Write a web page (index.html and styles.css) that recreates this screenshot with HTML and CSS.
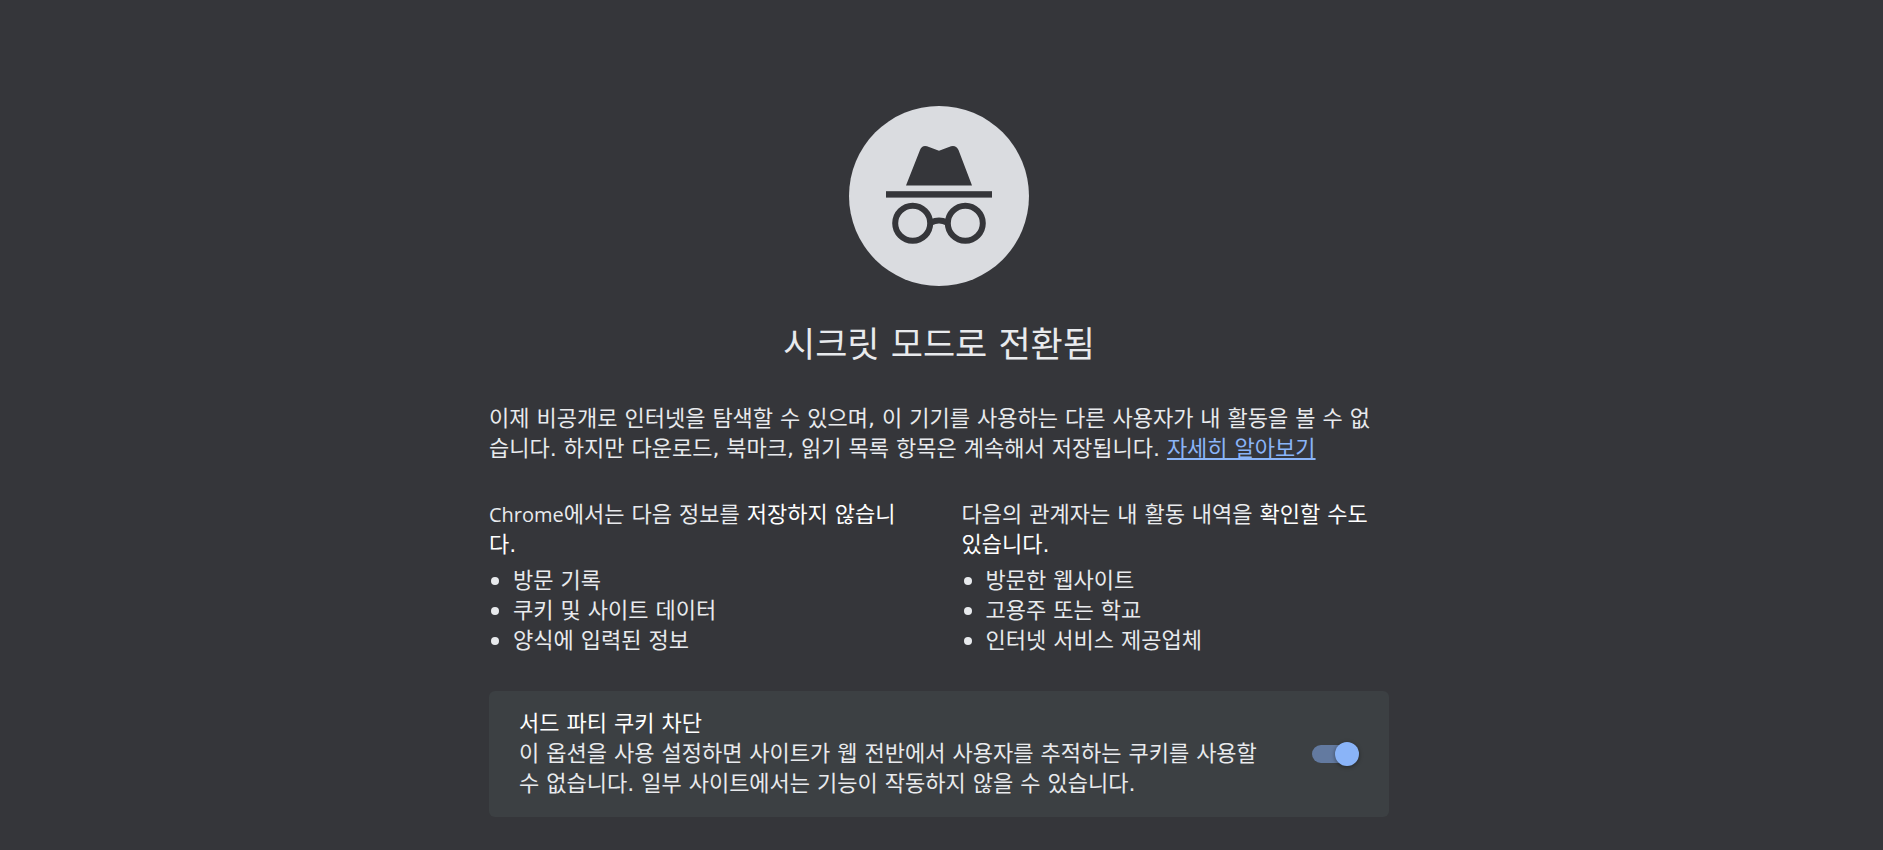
FILE: index.html
```html
<!DOCTYPE html>
<html lang="ko">
<head>
    <meta charset="UTF-8">
    <meta name="viewport" content="width=device-width, initial-scale=1.0">
    <title>새 시크릿 탭</title>
    <link rel="stylesheet" href="styles.css">
</head>
<body>
    <main class="content">
        <svg class="icon" viewBox="0 0 180 180" aria-hidden="true">
            <circle cx="90" cy="90" r="90" fill="#dadce0"/>
            <path fill="#35363a" d="M57 79.5 L71 44 Q73 39 78 40.3 L90 44.7 L102 40.3 Q107 39 109.5 44 L123 79.5 Z"/>
            <rect x="37" y="85.2" width="106" height="6.4" fill="#35363a"/>
            <g fill="none" stroke="#35363a" stroke-width="6">
                <circle cx="63.7" cy="117.3" r="17.5"/>
                <circle cx="116.3" cy="117.3" r="17.5"/>
                <path d="M82 116.5 Q90 112.5 98 116.5"/>
            </g>
        </svg>

        <h1>시크릿 모드로 전환됨</h1>

        <p class="subtitle">이제 비공개로 인터넷을 탐색할 수 있으며, 이 기기를 사용하는 다른 사용자가 내 활동을 볼 수 없습니다. 하지만 다운로드, 북마크, 읽기 목록 항목은 계속해서 저장됩니다. <a href="#">자세히 알아보기</a></p>

        <div class="columns">
            <div class="column">
                <span class="brand">Chrome</span>에서는 다음 정보를 <em>저장하지 않습니다.</em>
                <ul>
                    <li>방문 기록</li>
                    <li>쿠키 및 사이트 데이터</li>
                    <li>양식에 입력된 정보</li>
                </ul>
            </div>
            <div class="column">
                다음의 관계자는 내 활동 내역을 <em>확인할 수도 있습니다.</em>
                <ul>
                    <li>방문한 웹사이트</li>
                    <li>고용주 또는 학교</li>
                    <li>인터넷 서비스 제공업체</li>
                </ul>
            </div>
        </div>

        <div class="cookie-controls">
            <div class="cookie-text">
                <label for="cookieToggle">서드 파티 쿠키 차단</label>
                <p>이 옵션을 사용 설정하면 사이트가 웹 전반에서 사용자를 추적하는 쿠키를 사용할 수 없습니다. 일부 사이트에서는 기능이 작동하지 않을 수 있습니다.</p>
            </div>
            <input type="checkbox" class="toggle" id="cookieToggle" checked>
        </div>
    </main>
</body>
</html>
```

FILE: styles.css
```css
* {
    box-sizing: border-box;
}
body {
    margin: 0;
    padding: 106px 5px 32px 0;
    background-color: #35363a;
    color: #e8eaed;
    font-family: "DejaVu Sans", "Noto Sans CJK KR", sans-serif;
    font-size: 22px;
    line-height: 30px;
}
.content {
    max-width: 900px;
    margin: 0 auto;
}
.icon {
    display: block;
    width: 180px;
    height: 180px;
    margin: 0 auto;
}
h1 {
    margin: 36px 0;
    font-size: 35px;
    font-weight: 400;
    line-height: 46px;
    text-align: center;
}
p {
    margin: 0;
}
a {
    color: #8ab4f8;
}
em {
    color: #fff;
    font-style: normal;
}
.subtitle {
    padding-right: 10px;
}
.brand {
    font-family: "Open Sans", sans-serif;
    font-size: 20px;
}
.columns {
    display: grid;
    grid-template-columns: 1fr 1fr;
    gap: 45px;
    margin: 36px 0 35px;
}
ul {
    margin: 6px 0 0;
    padding-left: 2px;
    list-style: none;
}
li {
    display: flex;
    align-items: center;
    gap: 14px;
}
li::before {
    content: "";
    width: 8px;
    height: 8px;
    border-radius: 50%;
    background-color: #e8eaed;
}
.cookie-controls {
    display: flex;
    align-items: center;
    gap: 36px;
    padding: 18px 30px;
    background-color: #3c4043;
    border-radius: 6px;
}
.cookie-text {
    flex: 1;
}
.cookie-text label {
    display: block;
    color: #fff;
}
.toggle {
    appearance: none;
    position: relative;
    flex: none;
    width: 42px;
    height: 18px;
    margin: 0 5px 0 0;
    border-radius: 9px;
    background-color: #637aa0;
    cursor: pointer;
}
.toggle::before {
    content: "";
    position: absolute;
    top: -3px;
    left: -5px;
    width: 24px;
    height: 24px;
    border-radius: 50%;
    background-color: #8ab4f8;
    box-shadow: 0 1px 4px rgba(0, 0, 0, 0.4);
}
.toggle:checked::before {
    left: auto;
    right: -5px;
}
```
